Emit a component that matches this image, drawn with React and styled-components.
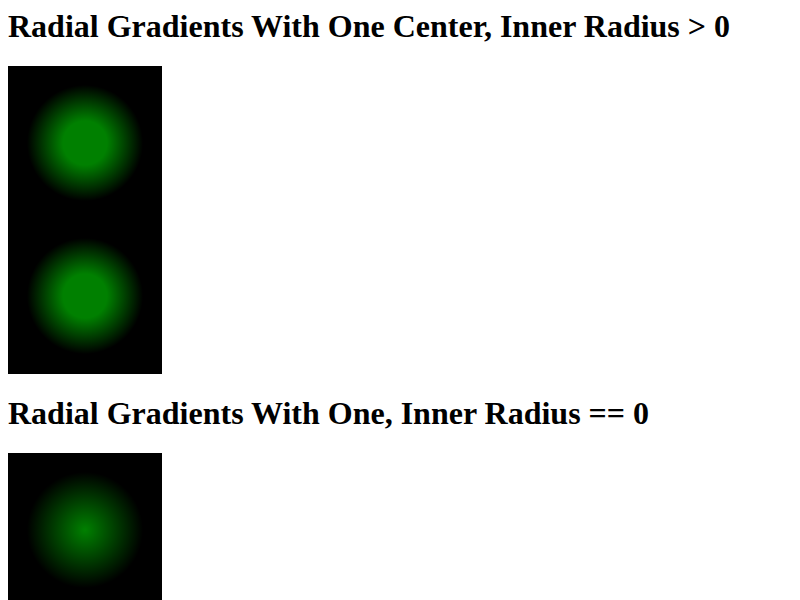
import styled, { createGlobalStyle } from 'styled-components';

const GlobalStyle = createGlobalStyle`
	html {
		overflow-y: scroll;
	}
	body {
		margin: 8px;
		background: #fff;
		font-family: "Liberation Serif", "Times New Roman", serif;
	}
`;

const Heading = styled.h1`
	margin: ${(p) => (p.$first ? '0 0 21px' : '21px 0')};
	font-size: 32px;
	font-weight: bold;
	color: #000;
`;

const Canvas = styled.div`
	width: 154px;
	height: 308px;
	background-color: #000;
	background-image:
		radial-gradient(circle at 77px 77px, #008000 ${(p) => p.$inner}px, #000 58px),
		radial-gradient(circle at 77px 77px, #008000 ${(p) => p.$inner}px, #000 58px);
	background-size: 154px 154px;
	background-position: 0 0, 0 153px;
	background-repeat: no-repeat;
`;

const App = () => {
	return (
		<>
			<GlobalStyle />
			<Heading $first>Radial Gradients With One Center, Inner Radius &gt; 0</Heading>
			<Canvas $inner={22} />
			<Heading>Radial Gradients With One, Inner Radius == 0</Heading>
			<Canvas $inner={0} />
		</>
	);
};

export default App;
